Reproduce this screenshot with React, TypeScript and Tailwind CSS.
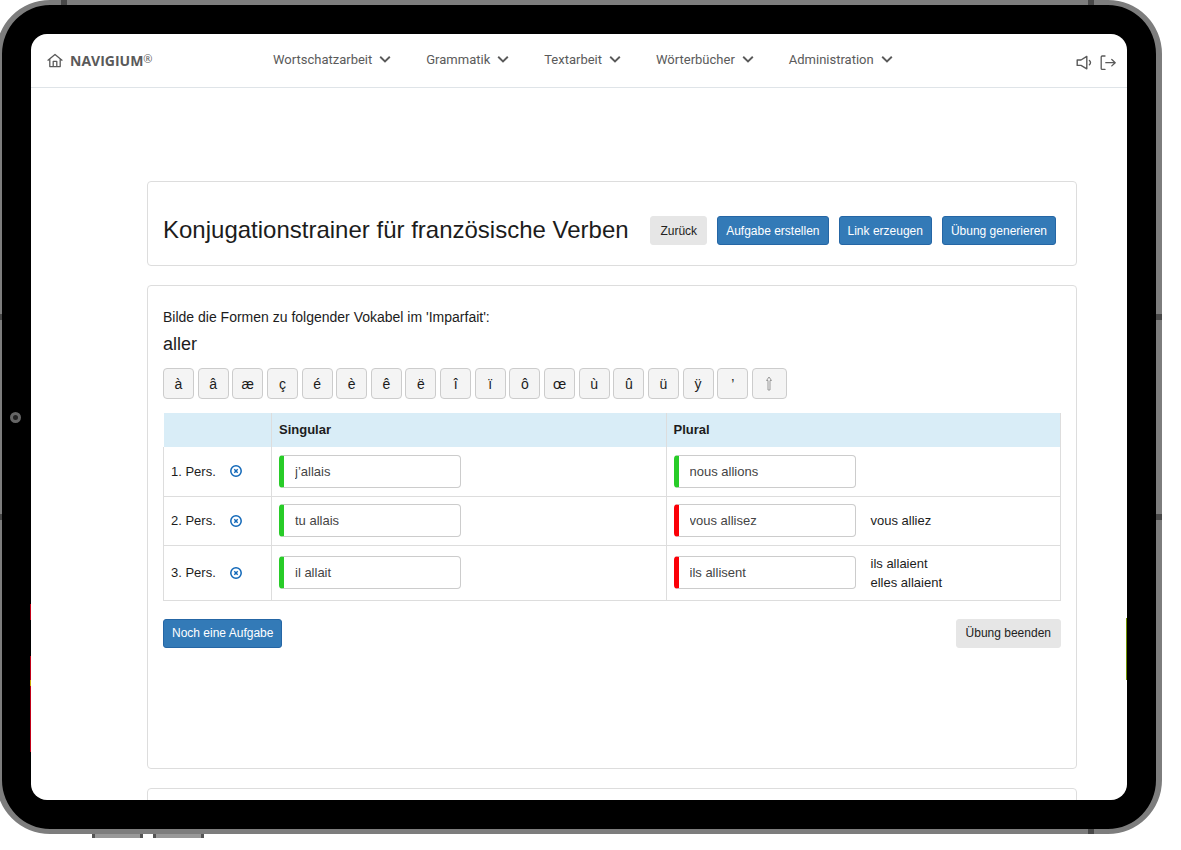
import { useState } from "react";

const menus = ["Wortschatzarbeit", "Grammatik", "Textarbeit", "Wörterbücher", "Administration"];

const letters = ["à", "â", "æ", "ç", "é", "è", "ê", "ë", "î", "ï", "ô", "œ", "ù", "û", "ü", "ÿ", "’"];

const rows = [
  { person: "1. Pers.", height: "h-[49px]", singular: "j’allais", plural: "nous allions", correct: true, solution: [] as string[] },
  { person: "2. Pers.", height: "h-[49px]", singular: "tu allais", plural: "vous allisez", correct: false, solution: ["vous alliez"] },
  { person: "3. Pers.", height: "h-[55px]", singular: "il allait", plural: "ils allisent", correct: false, solution: ["ils allaient", "elles allaient"] },
];

function HomeIcon() {
  return (
    <svg viewBox="0 0 16 16" className="size-4" fill="none" stroke="currentColor" strokeWidth="1.3" strokeLinejoin="round" strokeLinecap="round" aria-hidden="true">
      <path d="M1 7.2 8 1.500l7 5.700M2.800 6v7.600h10.400V6M6.200 13.600V8.400h3.600v5.200" />
    </svg>
  );
}

function SpeakerIcon() {
  return (
    <svg viewBox="0 0 16 16" className="size-4" fill="none" stroke="currentColor" strokeWidth="1.400" strokeLinejoin="round" strokeLinecap="round" aria-hidden="true">
      <path d="M1.200 5h3.800L10.800 1.400v12.400L5 10.400H1.200zM13.400 5.600q2.200 2.100 0 4.200" />
    </svg>
  );
}

function LogoutIcon() {
  return (
    <svg viewBox="0 0 16 16" className="size-4" fill="none" stroke="currentColor" strokeWidth="1.300" strokeLinejoin="round" strokeLinecap="round" aria-hidden="true">
      <path d="M5 1H2.200Q1.200 1 1.200 2v11.400q0 1 1 1H5M5.800 7.700h9.400M11.800 4.500l3.400 3.200-3.400 3.200" />
    </svg>
  );
}

function Chevron() {
  return (
    <svg viewBox="0 0 12 10" className="h-[10px] w-3" fill="none" stroke="currentColor" strokeWidth="1.900" aria-hidden="true">
      <path d="m1.200 1.800 4.800 4.700 4.800-4.700" />
    </svg>
  );
}

function ClearIcon() {
  return (
    <svg viewBox="0 0 12 12" className="size-3" fill="none" stroke="currentColor" aria-hidden="true">
      <circle cx="6" cy="6" r="5.200" strokeWidth="1.500" />
      <path d="m4.300 4.300 3.400 3.400m0-3.400L4.300 7.700" strokeWidth="1.400" />
    </svg>
  );
}

function ActionButton({ children, primary = false }: { children: string; primary?: boolean }) {
  return (
    <button
      type="button"
      className={
        primary
          ? "h-[29px] rounded-[3px] border border-[#2566a5] bg-[#337ab7] px-2 text-xs whitespace-nowrap text-white"
          : "h-[29px] rounded-[3px] border border-[#e6e6e6] bg-[#e6e6e6] px-[9px] text-xs whitespace-nowrap text-[#222]"
      }
    >
      {children}
    </button>
  );
}

function Answer({ label, initial, correct }: { label: string; initial: string; correct: boolean }) {
  const [value, setValue] = useState(initial);
  return (
    <input
      type="text"
      aria-label={label}
      value={value}
      onChange={(e) => setValue(e.target.value)}
      className={
        correct
          ? "h-[33px] w-[182px] rounded-[4px] border border-l-[5px] border-[#ccc] border-l-[#28cc28] bg-white pl-[11px] text-[13px] text-[#444]"
          : "h-[33px] w-[182px] rounded-[4px] border border-l-[5px] border-[#ccc] border-l-[#fb0007] bg-white pl-[11px] text-[13px] text-[#444]"
      }
    />
  );
}

export default function App() {
  return (
    <div className="min-h-screen overflow-hidden bg-white font-['Liberation_Sans',Arial,sans-serif]">
      <div className="relative mr-[19px] -ml-1 h-[calc(100vh-16px)] rounded-[54px] border-6 border-t-5 border-b-5 border-[#7d7d7d] bg-black px-[29px] pt-[29px] pb-[29px]">
        <span className="absolute -top-[5px] left-[59px] h-[5px] w-1.5 bg-[#484848]" />
        <span className="absolute -top-[5px] right-[62px] h-[5px] w-1.5 bg-[#484848]" />
        <span className="absolute right-[62px] -bottom-[5px] h-[5px] w-1.5 bg-[#484848]" />
        <span className="absolute top-[309px] -right-1.5 h-1.5 w-1.5 bg-[#484848]" />
        <span className="absolute top-[509px] -right-1.5 h-1.5 w-1.5 bg-[#484848]" />
        <span className="absolute top-[309px] -left-1.5 h-1.5 w-1.5 bg-[#484848]" />
        <span className="absolute top-[509px] -left-1.5 h-1.5 w-1.5 bg-[#484848]" />
        <span className="absolute top-[407px] left-2 size-[11px] rounded-full border-3 border-[#666] bg-[#222]" />
        <span className="absolute -bottom-[9px] left-[90px] h-1 w-[51px] border-x-3 border-[#555] bg-[#999]" />
        <span className="absolute -bottom-[9px] left-[151px] h-1 w-[51px] border-x-3 border-[#555] bg-[#999]" />
        <span className="absolute top-[599px] left-7 h-4 w-px bg-[#c00018]" />
        <span className="absolute top-[651px] left-7 h-6 w-px bg-[#c00018]" />
        <span className="absolute top-[675px] left-7 h-1.5 w-px bg-[#c9a800]" />
        <span className="absolute top-[681px] left-7 h-[66px] w-px bg-[#c00018]" />
        <span className="absolute top-[613px] right-[29px] h-[62px] w-px bg-[#6f8f00]" />

        <div className="flex h-full flex-col overflow-hidden rounded-2xl bg-white">
          <header className="flex h-[54px] shrink-0 items-center border-b border-[#dfe4e8] pr-[11px] pl-4 text-[#5a5a5a]">
            <a href="#" className="flex w-[226px] items-center gap-[7px] font-['Open_Sans',sans-serif] text-sm font-bold">
              <HomeIcon />
              <span>NAVIGIUM<span className="align-[3px] text-[11px] leading-none font-normal">®</span></span>
            </a>
            <nav className="flex flex-1 gap-[35px] pb-0.5 font-['Roboto',sans-serif] text-[13px]">
              {menus.map((label) => (
                <button key={label} type="button" className="flex items-center gap-[7px] whitespace-nowrap">
                  {label}
                  <Chevron />
                </button>
              ))}
            </nav>
            <div className="flex gap-2 pt-1">
              <button type="button" aria-label="Ton"><SpeakerIcon /></button>
              <button type="button" aria-label="Abmelden"><LogoutIcon /></button>
            </div>
          </header>

          <main className="flex flex-1 flex-col gap-[19px] overflow-hidden pt-[93px] pr-[50px] pl-[116px] text-[#1c1c1c]">
            <section className="flex h-[85px] shrink-0 items-center justify-between rounded-[4px] border border-[#ddd] pt-[14px] pr-5 pl-[15px]">
              <h1 className="pb-0.5 text-2xl whitespace-nowrap">Konjugationstrainer für französische Verben</h1>
              <div className="flex gap-[10px]">
                <ActionButton>Zurück</ActionButton>
                <ActionButton primary>Aufgabe erstellen</ActionButton>
                <ActionButton primary>Link erzeugen</ActionButton>
                <ActionButton primary>Übung generieren</ActionButton>
              </div>
            </section>

            <section className="h-[484px] shrink-0 rounded-[4px] border border-[#ddd] px-[15px] pt-[21px]">
              <p className="text-sm leading-5">Bilde die Formen zu folgender Vokabel im 'Imparfait':</p>
              <h2 className="mt-[5px] text-lg leading-6">aller</h2>
              <div className="mt-3 flex w-[624px] justify-between">
                {letters.map((l) => (
                  <button key={l} type="button" className="size-[31px] rounded-[4px] border border-[#ccc] bg-[#f4f4f4] text-sm">
                    {l}
                  </button>
                ))}
                <button type="button" aria-label="Umschalten" className="flex h-[31px] w-[35px] items-center justify-center rounded-[4px] border border-[#ccc] bg-[#f4f4f4] text-[#999]">
                  <svg viewBox="0 0 8 16" className="h-4 w-2" fill="none" stroke="currentColor" aria-hidden="true">
                    <path d="M4 1 1.500 4.500H3V14h2V4.500h1.500z" />
                  </svg>
                </button>
              </div>

              <table className="mt-[14px] w-full table-fixed border-collapse text-[13px]">
                <thead>
                  <tr className="h-[34px] bg-[#d9edf7] text-left">
                    <th className="w-[108px] border-r border-[#ddd]" aria-label="Person" />
                    <th className="border-r border-[#ddd] px-[7px]">Singular</th>
                    <th className="border-r border-[#ddd] px-[7px]">Plural</th>
                  </tr>
                </thead>
                <tbody>
                  {rows.map((r) => (
                    <tr key={r.person} className={r.height}>
                      <td className="border border-t-0 border-[#ddd] px-[7px]">
                        <div className="flex items-center gap-[14px]">
                          {r.person}
                          <button type="button" aria-label={`${r.person} leeren`} className="text-[#1067b8]"><ClearIcon /></button>
                        </div>
                      </td>
                      <td className="border border-t-0 border-[#ddd] px-[7px]">
                        <Answer label={`${r.person} Singular`} initial={r.singular} correct />
                      </td>
                      <td className="border border-t-0 border-[#ddd] px-[7px]">
                        <div className="flex items-center gap-[15px]">
                          <Answer label={`${r.person} Plural`} initial={r.plural} correct={r.correct} />
                          <div className="leading-[19px]">
                            {r.solution.map((s) => <p key={s}>{s}</p>)}
                          </div>
                        </div>
                      </td>
                    </tr>
                  ))}
                </tbody>
              </table>

              <div className="mt-[18px] flex justify-between">
                <ActionButton primary>Noch eine Aufgabe</ActionButton>
                <ActionButton>Übung beenden</ActionButton>
              </div>
            </section>

            <section className="h-20 shrink-0 rounded-[4px] border border-[#ddd]" />
          </main>
        </div>
      </div>
    </div>
  );
}
